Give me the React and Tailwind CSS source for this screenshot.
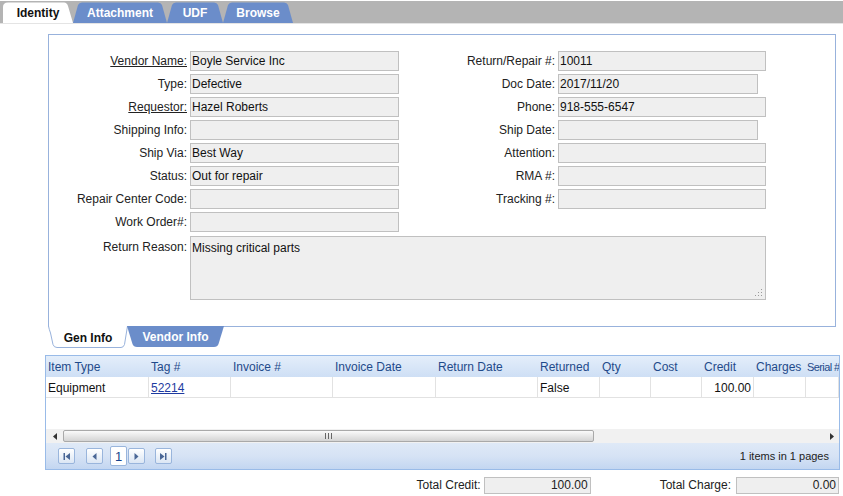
import React from "react";

const BLUE_TAB = "#6b8dca";

function TopTab({ width, path, fill, textClass, children }) {
  return (
    <div className="relative flex h-[21px] items-center justify-center" style={{ width }}>
      <svg className="absolute inset-0" width={width} height="21" viewBox={`0 0 ${width} 21`}>
        <path d={path} fill={fill} />
      </svg>
      <span className={`relative text-[12px] font-bold ${textClass}`}>{children}</span>
    </div>
  );
}

function Field({ label, value, underline, labelClass, inputClass }) {
  return (
    <div className="flex h-[20px] items-center">
      <span className={`${labelClass} whitespace-nowrap text-right ${underline ? "underline" : ""}`}>{label}</span>
      <div className={`${inputClass} h-[20px] border border-[#c0c0c0] bg-[#efefef] pl-[1px] leading-[18px] text-[#111]`}>{value}</div>
    </div>
  );
}

const left = [
  ["Vendor Name:", "Boyle Service Inc", true],
  ["Type:", "Defective"],
  ["Requestor:", "Hazel Roberts", true],
  ["Shipping Info:", ""],
  ["Ship Via:", "Best Way"],
  ["Status:", "Out for repair"],
  ["Repair Center Code:", ""],
  ["Work Order#:", ""],
];

const right = [
  ["Return/Repair #:", "10011", "w-[208px]"],
  ["Doc Date:", "2017/11/20", "w-[200px]"],
  ["Phone:", "918-555-6547", "w-[208px]"],
  ["Ship Date:", "", "w-[200px]"],
  ["Attention:", "", "w-[208px]"],
  ["RMA #:", "", "w-[208px]"],
  ["Tracking #:", "", "w-[208px]"],
];

const cols = [
  ["Item Type", "w-[103px] pl-[2px]"],
  ["Tag #", "w-[82px] pl-[2px]"],
  ["Invoice #", "w-[102px] pl-[2px]"],
  ["Invoice Date", "w-[103px] pl-[2px]"],
  ["Return Date", "w-[102px] pl-[2px]"],
  ["Returned", "w-[62px] pl-[2px]"],
  ["Qty", "w-[51px] pl-[2px]"],
  ["Cost", "w-[51px] pl-[2px]"],
  ["Credit", "w-[52px] pl-[2px]"],
  ["Charges", "w-[52px] pl-[2px]"],
  ["Serial #", "flex-1 pl-[1px] text-[11px] tracking-[-0.6px]"],
];

function PagerBtn({ children }) {
  return (
    <div className="flex h-[16px] w-[17px] items-center justify-center rounded-[2px] border border-[#99b5dc] bg-gradient-to-b from-[#ffffff] to-[#dbe6f4]">
      <svg width="7" height="7" viewBox="0 0 7 7" fill="#4a6796">
        {children}
      </svg>
    </div>
  );
}

export default function App() {
  return (
    <div className="min-h-[496px] w-[843px] bg-white text-[12px] text-[#222]" style={{ fontFamily: '"Liberation Sans", Arial, sans-serif' }}>
      {/* top tabs */}
      <div className="pt-[1px]">
        <div className="flex h-[22px] items-end bg-[#b4b4b4] pl-[3px]">
          <TopTab width={70} fill="#ffffff" textClass="text-[#111]" path="M0 21 L0 5 Q0 0.5 5 0.5 L61 0.5 Q64 0.5 65 4 L70 21 Z">
            Identity
          </TopTab>
          <TopTab width={94} fill={BLUE_TAB} textClass="text-white" path="M0 21 L5 3 Q6 0.5 9 0.5 L85 0.5 Q88 0.5 89 3 L94 21 Z">
            Attachment
          </TopTab>
          <TopTab width={56} fill={BLUE_TAB} textClass="text-white" path="M0 21 L5 3 Q6 0.5 9 0.5 L47 0.5 Q50 0.5 51 3 L56 21 Z">
            UDF
          </TopTab>
          <TopTab width={70} fill={BLUE_TAB} textClass="text-white" path="M0 21 L5 3 Q6 0.5 9 0.5 L61 0.5 Q64 0.5 65 3 L70 21 Z">
            Browse
          </TopTab>
        </div>
        <div className="h-[1px] bg-[#e4e4e4]" />
      </div>

      {/* identity panel */}
      <div className="ml-[48px] mt-[10px] h-[293px] w-[788px] border border-[#98b2dc] pt-[16px]">
        <div className="flex">
          <div className="flex flex-col gap-[3px]">
            {left.map(([l, v, u]) => (
              <Field key={l} label={l} value={v} underline={u} labelClass="w-[141px] pr-[3px]" inputClass="w-[209px]" />
            ))}
          </div>
          <div className="flex flex-col gap-[3px]">
            {right.map(([l, v, w]) => (
              <Field key={l} label={l} value={v} labelClass="w-[159px] pr-[3px]" inputClass={w} />
            ))}
          </div>
        </div>
        <div className="mt-[4px] flex">
          <span className="w-[141px] pr-[3px] pt-[2px] text-right">Return Reason:</span>
          <div className="relative h-[64px] w-[576px] border border-[#c0c0c0] bg-[#efefef] pl-[1px] pt-[2px] text-[#111]">
            Missing critical parts
            <svg className="absolute bottom-[2px] right-[2px]" width="8" height="8" viewBox="0 0 8 8" fill="#9a9a9a">
              <rect x="6" y="0" width="1" height="1" />
              <rect x="3" y="3" width="1" height="1" />
              <rect x="6" y="3" width="1" height="1" />
              <rect x="0" y="6" width="1" height="1" />
              <rect x="3" y="6" width="1" height="1" />
              <rect x="6" y="6" width="1" height="1" />
            </svg>
          </div>
        </div>
      </div>

      {/* sub tabs */}
      <div className="relative -mt-[1px] ml-[48px] flex">
        <div className="relative flex h-[22px] w-[80px] items-center justify-center pt-[1px]">
          <svg className="absolute inset-0" width="80" height="22" viewBox="0 0 80 22">
            <path d="M0.5 0 Q1 3 2.5 7 L5 18.5 Q6 21.5 9 21.5 L73 21.5 Q75.5 21.5 76.5 18.5 L79.5 0 Z" fill="#ffffff" />
            <path d="M0.5 0 Q1 3 2.5 7 L5 18.5 Q6 21.5 9 21.5 L73 21.5 Q75.5 21.5 76.5 18.5 L79.5 0" fill="none" stroke="#98b2dc" />
          </svg>
          <span className="relative font-bold text-[#111]">Gen Info</span>
        </div>
        <div className="relative -ml-[1px] flex h-[21px] w-[97px] items-center justify-center">
          <svg className="absolute inset-0" width="97" height="21" viewBox="0 0 97 21">
            <path d="M0 0 L97 0 L91.5 18 Q90.5 21 87 21 L10 21 Q6.5 21 5.5 18 Z" fill={BLUE_TAB} />
          </svg>
          <span className="relative font-bold text-white">Vendor Info</span>
        </div>
      </div>

      {/* grid */}
      <div className="ml-[45px] mt-[7px] w-[795px] border border-[#99bbe8]">
        <div className="flex h-[21px] bg-gradient-to-b from-[#e4eefa] to-[#cedff5] text-[#1f4a8a]">
          {cols.map(([c, w]) => (
            <div key={c} className={`${w} overflow-hidden whitespace-nowrap leading-[23px]`}>
              {c}
            </div>
          ))}
        </div>
        <div className="flex h-[21px] border-b border-[#e2e2e2] text-[#111]">
          {cols.map(([c, w], i) => (
            <div
              key={c}
              className={`${i === 10 ? "flex-1" : w} overflow-hidden whitespace-nowrap border-r border-[#e2e2e2] leading-[22px] ${i === 8 ? "pr-[2px] text-right" : ""}`}
            >
              {i === 0 && "Equipment"}
              {i === 1 && <span className="text-[#1d3aa0] underline">52214</span>}
              {i === 5 && "False"}
              {i === 8 && "100.00"}
            </div>
          ))}
        </div>
        <div className="h-[31px]" />
        {/* horizontal scrollbar */}
        <div className="flex h-[14px] items-center bg-[#f1f1f1]">
          <div className="flex w-[17px] justify-center">
            <svg width="4" height="7" viewBox="0 0 4 7" fill="#333">
              <path d="M4 0 L0 3.5 L4 7 Z" />
            </svg>
          </div>
          <div className="flex h-[12px] w-[531px] items-center justify-center rounded-[2px] border border-[#a9a9a9] bg-gradient-to-b from-[#fafafa] to-[#d4d4d4]">
            <svg width="7" height="6" viewBox="0 0 7 6" fill="#666">
              <rect x="0" y="0" width="1" height="6" />
              <rect x="3" y="0" width="1" height="6" />
              <rect x="6" y="0" width="1" height="6" />
            </svg>
          </div>
          <div className="flex-1" />
          <div className="flex w-[14px] justify-center">
            <svg width="4" height="7" viewBox="0 0 4 7" fill="#333">
              <path d="M0 0 L4 3.5 L0 7 Z" />
            </svg>
          </div>
        </div>
        {/* pager */}
        <div className="flex h-[26px] items-center bg-gradient-to-b from-[#dfe9f7] via-[#d6e3f5] to-[#c3d6f1] pl-[12px] pr-[10px]">
          <PagerBtn>
            <rect x="0.5" y="0" width="1.5" height="7" />
            <path d="M7 0 L2.5 3.5 L7 7 Z" />
          </PagerBtn>
          <div className="ml-[11px]">
            <PagerBtn>
              <path d="M5.5 0 L1.5 3.5 L5.5 7 Z" />
            </PagerBtn>
          </div>
          <div className="ml-[7px] flex h-[20px] w-[17px] items-center justify-center rounded-[2px] border border-[#99b5dc] bg-white pt-[2px] text-[13px] text-[#15428b]">
            1
          </div>
          <div className="ml-[1px]">
            <PagerBtn>
              <path d="M1.5 0 L5.5 3.5 L1.5 7 Z" />
            </PagerBtn>
          </div>
          <div className="ml-[10px]">
            <PagerBtn>
              <path d="M0 0 L4.5 3.5 L0 7 Z" />
              <rect x="5" y="0" width="1.5" height="7" />
            </PagerBtn>
          </div>
          <div className="flex-1" />
          <span className="text-[11px] text-[#222]">1 items in 1 pages</span>
        </div>
      </div>

      {/* totals */}
      <div className="mt-[6px] flex w-[839px] items-center justify-end">
        <span>Total Credit:</span>
        <div className="ml-[3px] h-[17px] w-[107px] border border-[#c0c0c0] bg-[#efefef] pr-[2px] text-right leading-[15px]">100.00</div>
        <span className="ml-[69px]">Total Charge:</span>
        <div className="ml-[5px] h-[17px] w-[103px] border border-[#c0c0c0] bg-[#efefef] pr-[2px] text-right leading-[15px]">0.00</div>
      </div>
    </div>
  );
}
